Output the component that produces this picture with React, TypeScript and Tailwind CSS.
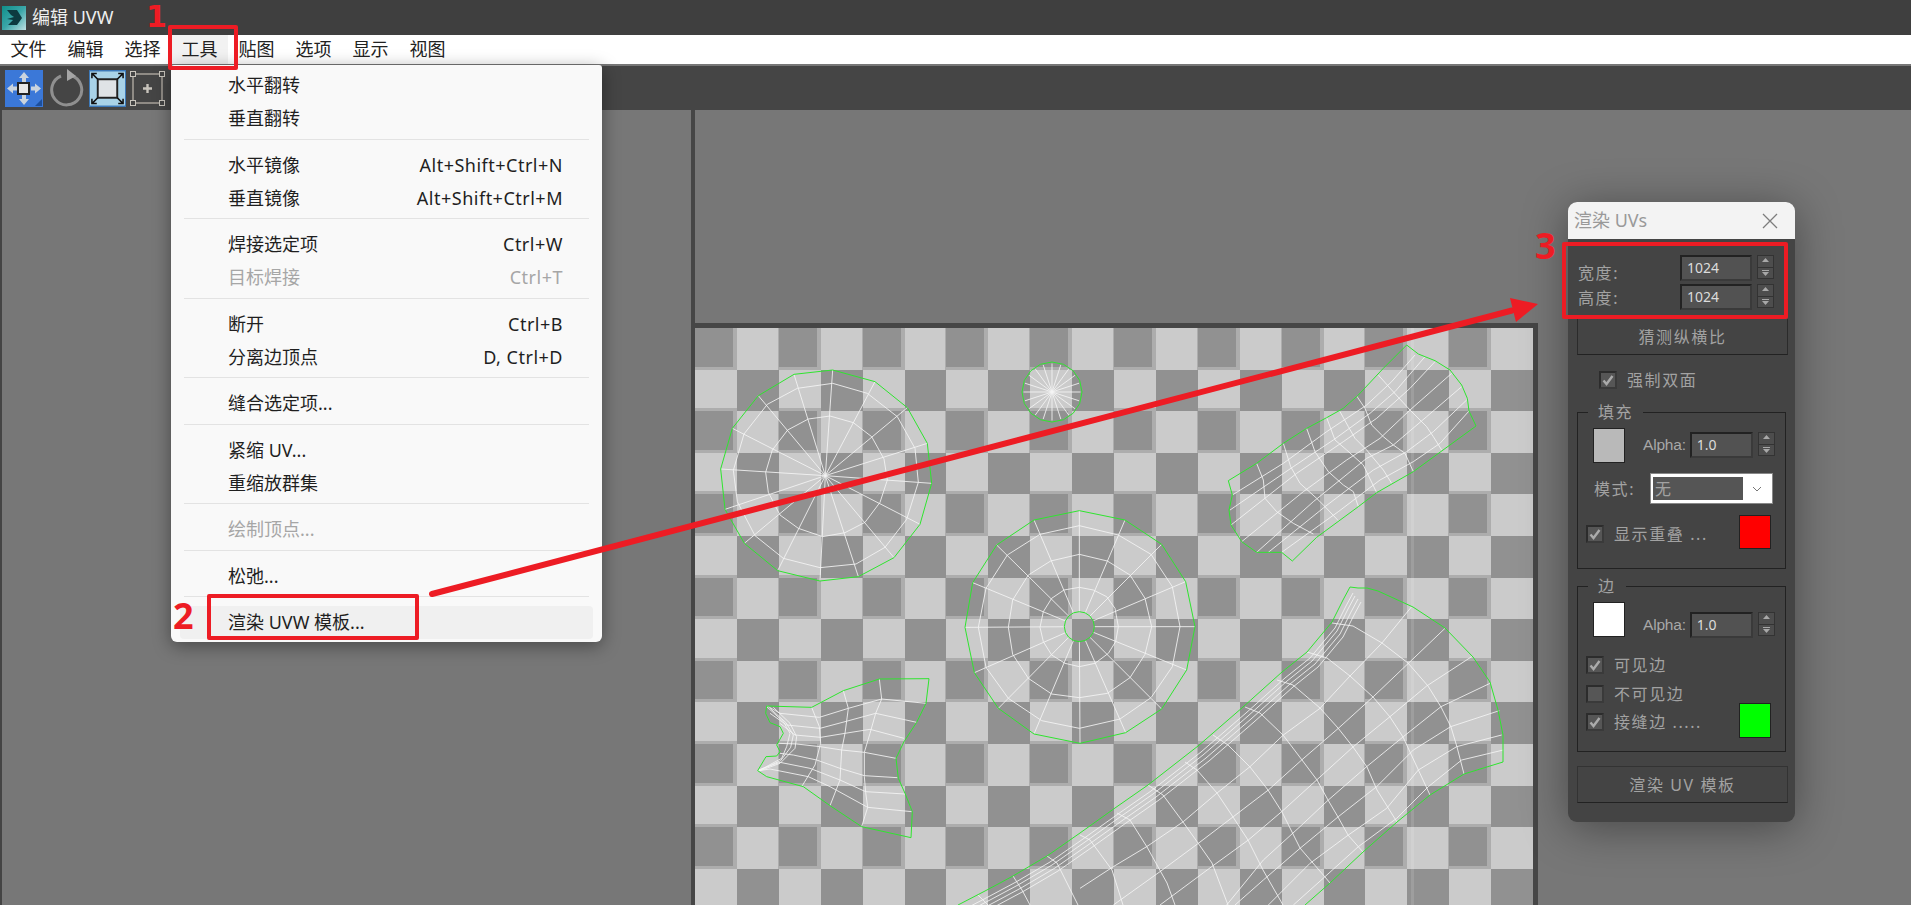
import React from "react";

type P = [number, number];
const pts = (a: P[]) => a.map((p) => p.join(",")).join(" ");
const WHITE = "#f4f4f4";
const GREEN = "#2fe52f";

const Line = ({ p, c = WHITE, o = 0.85, closed = false }: { p: P[]; c?: string; o?: number; closed?: boolean }) =>
  closed ? (
    <polygon points={pts(p)} fill="none" stroke={c} strokeOpacity={o} strokeWidth={1} vectorEffect="non-scaling-stroke" />
  ) : (
    <polyline points={pts(p)} fill="none" stroke={c} strokeOpacity={o} strokeWidth={1} vectorEffect="non-scaling-stroke" />
  );

const Zoomed = ({ x, y, children }: { x: number; y: number; children: React.ReactNode }) => (
  <g transform={`translate(${x} ${y}) scale(${1 / 3})`}>{children}</g>
);

/* first wheel (zoom coords from 680,310) */
const w1Outer: P[] = [[420,813],[535,800],[642,743],[720,643],[755,520],[742,400],[682,293],[585,215],[458,180],[342,193],[235,257],[157,355],[122,477],[135,598],[193,700],[293,782]];
const w1A: P[] = [[428,680],[495,668],[555,637],[600,577],[622,510],[612,447],[575,380],[520,338],[450,318],[385,327],[323,360],[277,420],[257,487],[265,547],[300,615],[355,655]];
const w1B: P[] = [[420,773],[528,762],[615,712],[680,628],[715,517],[705,415],[652,320],[562,250],[458,220],[352,235],[262,283],[192,372],[160,481],[172,575],[225,677],[310,745]];

/* second wheel (zoom coords from 960,505) */
const w2Outer: P[] = [[360,715],[497,683],[605,612],[680,495],[705,365],[677,230],[605,118],[495,45],[358,17],[222,45],[110,120],[38,233],[15,367],[43,503],[115,610],[222,687]];
const w2C: P[] = [[358,670],[480,642],[573,578],[637,485],[660,365],[637,245],[573,148],[475,90],[358,62],[240,88],[142,150],[78,250],[55,367],[78,487],[145,580],[245,647]];
const w2B: P[] = [[358,578],[442,565],[510,518],[555,448],[575,365],[555,280],[510,210],[442,168],[358,148],[272,168],[205,210],[158,285],[145,367],[158,448],[205,520],[275,567]];
const w2A: P[] = [[358,485],[405,475],[445,445],[467,410],[475,365],[465,310],[440,275],[400,255],[358,247],[312,255],[275,280],[250,320],[240,367],[250,410],[275,450],[315,475]];

const circlePts = (cx: number, cy: number, r: number, n: number): P[] =>
  Array.from({ length: n }, (_, i) => [cx + r * Math.cos((i * 2 * Math.PI) / n), cy + r * Math.sin((i * 2 * Math.PI) / n)] as P);

/* fragment at lower left (zoom coords from 680,600) */
const f3Outer: P[] = [[598,237],[747,236],[738,310],[710,367],[672,425],[648,475],[655,535],[675,580],[697,635],[693,713],[545,680],[450,617],[370,560],[260,530],[233,512],[258,470],[290,468],[300,455],[290,435],[310,400],[300,380],[270,368],[257,340],[260,318],[395,322],[490,272]];
const f3Lines: P[][] = [
  [[598,237],[605,297],[587,340],[570,400],[553,457],[553,530],[557,577],[563,622],[545,680]],
  [[490,272],[505,325],[495,400],[485,450],[480,540],[450,617]],
  [[395,322],[418,380],[422,430],[405,495],[365,560]],
  [[738,310],[605,297],[505,325],[418,352],[300,340],[262,318]],
  [[710,367],[587,340],[495,365],[420,385],[320,375],[270,340]],
  [[672,415],[570,388],[495,400],[422,412],[345,405],[300,370]],
  [[648,475],[553,457],[485,450],[420,440],[350,432],[295,430]],
  [[652,533],[553,527],[480,505],[410,480],[340,465],[300,460]],
  [[675,582],[557,575],[480,540],[390,505],[300,487],[235,510]],
  [[695,635],[563,622],[450,560],[385,530],[270,507],[235,512]],
  [[260,320],[310,365],[330,400],[320,440],[305,475],[240,510]],
  [[280,322],[330,370],[350,410],[345,445],[300,490],[240,512]],
  [[270,325],[318,368],[340,405],[332,442],[302,482],[238,511]],
];

/* fragment upper right (zoom coords from 1080,310) */
const f4Outer: P[] = [[980,105],[1015,132],[1065,152],[1110,180],[1145,225],[1162,265],[1167,303],[1188,348],[1000,485],[890,548],[835,590],[710,682],[637,753],[605,727],[530,727],[485,695],[453,645],[447,600],[457,555],[445,512],[530,460],[610,400],[680,355],[740,323],[790,295],[835,255],[910,175]];
const f4Lines: P[][] = [
  [[530,460],[550,510],[555,565],[590,605],[640,640],[700,672]],
  [[610,400],[632,470],[660,520],[710,565],[735,590],[775,632]],
  [[680,355],[705,425],[745,485],[790,525],[820,545],[835,590]],
  [[740,323],[765,390],[800,420],[850,465],[890,548]],
  [[780,305],[805,350],[825,385],[860,420],[910,480],[935,520]],
  [[830,258],[855,295],[875,345],[910,380],[940,405],[975,430],[1000,485]],
  [[895,195],[935,240],[990,300],[1040,350],[1060,380],[1085,420]],
  [[457,555],[610,460],[740,365],[860,285],[935,215],[1005,135]],
  [[450,600],[640,470],[760,390],[870,310],[945,245],[1035,140]],
  [[453,645],[650,490],[790,395],[890,325],[990,235],[1065,155]],
  [[485,695],[670,545],[800,450],[900,385],[990,300],[1115,190]],
  [[530,727],[700,575],[860,445],[940,405],[1040,320],[1145,230]],
  [[565,727],[735,590],[880,480],[980,425],[1060,365],[1160,270]],
  [[605,727],[775,605],[900,510],[1000,455],[1080,400],[1167,303]],
];

/* long fragment (page coords for the outline) */
const edge: P[] = [[958,905],[985,891],[1013,876],[1047,856],[1080,833],[1115,808],[1148,785],[1198,746],[1243,707],[1282,672],[1307,652],[1332,622],[1343,600],[1350,587]];
const f5Outer: P[] = [...edge,[1358,588],[1367,588],[1378,591],[1413,607],[1445,628],[1473,657],[1490,682],[1498,710],[1503,735],[1503,762],[1464,774],[1430,795],[1397,822],[1363,852],[1330,883],[1305,905]];
const f5Cross: P[][] = [
  [[1332,623],[1353,626],[1382,643],[1408,663],[1428,686],[1441,707],[1451,727],[1457,747],[1464,774]],
  [[1307,652],[1327,658],[1350,676],[1373,697],[1390,717],[1403,737],[1417,767],[1430,795]],
  [[1277,680],[1293,685],[1320,708],[1338,728],[1353,747],[1367,767],[1377,790],[1397,822]],
  [[1245,707],[1260,713],[1283,735],[1302,760],[1317,780],[1328,800],[1338,817],[1348,835],[1363,852]],
  [[1213,735],[1228,745],[1250,767],[1268,790],[1282,812],[1300,848],[1325,877],[1330,883]],
  [[1185,762],[1197,770],[1217,793],[1233,817],[1248,840],[1263,870],[1283,905]],
  [[1148,785],[1163,795],[1183,822],[1198,843],[1212,863],[1228,905]],
  [[1117,813],[1130,820],[1147,847],[1167,883],[1175,905]],
  [[1080,835],[1090,840],[1112,870],[1123,905]],
  [[1047,856],[1057,863],[1078,905]],
  [[1013,876],[1022,890],[1030,905]],
  [[978,895],[988,905]],
];
const f5Long: P[][] = ([
  [[1175,170],[1040,258],[930,350],[820,440],[710,540],[605,635],[505,720],[395,800],[240,915]],
  [[1095,85],[985,190],[880,290],[775,385],[665,480],[565,570],[460,650],[355,730],[240,815],[100,915]],
  [[995,20],[905,130],[810,228],[720,325],[610,405],[510,500],[410,580],[310,665],[200,740],[100,800],[0,865]],
  [[1230,250],[1083,320],[970,410],[860,500],[745,600],[660,680],[550,780],[440,915]],
  [[1258,332],[1112,380],[1000,450],[890,560],[775,650],[660,745],[550,840],[465,915]],
  [[1265,405],[1130,440],[1015,510],[920,625],[805,705],[690,790],[600,880],[565,915]],
  [[1270,450],[1145,480],[1045,560],[950,655],[835,740],[735,830],[640,915]],
] as P[][]).map((l) => l.map(([x, y]) => [x / 3 + 1080, y / 3 + 600] as P));
const f5Dense: P[][] = [[3,6],[5,9],[8,12],[11,15]].map(([dx, dy]) =>
  edge.map(([x, y]) => [x + dx, y + dy] as P)
);

const X0 = 695;
const Y0 = 328;
const CW = 41.9;
const CH = 41.6;

function Scene() {
  const cells: React.ReactNode[] = [];
  for (let r = 0; r < 14; r++) {
    for (let c = 0; c < 20; c++) {
      const x = Math.round(X0 + c * CW);
      const y = Math.round(Y0 + r * CH);
      const w = Math.round(X0 + (c + 1) * CW) - x;
      const h = Math.round(Y0 + (r + 1) * CH) - y;
      const dark = (r + c) % 2 === 0;
      const vw = c % 2 === 0 ? 4 : 1;
      cells.push(<rect key={`c${r}-${c}`} x={x} y={y} width={w} height={h} fill={dark ? "#919191" : "#cbcbcb"} />);
      if (c % 2 === 0) cells.push(<rect key={`h${r}-${c}`} x={x} y={y + h - 3} width={w} height={3} fill="#adadad" />);
      if (r % 2 === 0 && c < 19) cells.push(<rect key={`v${r}-${c}`} x={x + w - vw} y={y} width={vw} height={h} fill="#adadad" />);
    }
  }
  const cx1 = 436, cy1 = 497;
  const cx2 = 358, cy2 = 365;
  const small = circlePts(1052, 392, 30, 16);
  const smallS = circlePts(1052, 392, 28.5, 20);
  return (
    <svg className="absolute left-0 top-0" width={1911} height={905}>
      <g shapeRendering="crispEdges">{cells}
        <rect x={1411} y={Y0} width={3} height={577} fill="#ffffff" fillOpacity={0.12} />
      </g>
      {/* first wheel */}
      <Zoomed x={680} y={310}>
        {w1Outer.map((p, i) => <Line key={i} p={[[cx1, cy1], p]} />)}
        <Line p={w1A} closed />
        <Line p={w1B} closed />
        <Line p={w1Outer} c={GREEN} o={1} closed />
      </Zoomed>
      {/* tiny wheel */}
      {smallS.map((p, i) => <Line key={i} p={[[1052, 392], p]} />)}
      <Line p={small} c={GREEN} o={1} closed />
      {/* second wheel */}
      <Zoomed x={960} y={505}>
        {w2Outer.map((p, i) => {
          const d = Math.hypot(p[0] - cx2, p[1] - cy2);
          const s: P = [cx2 + ((p[0] - cx2) / d) * 45, cy2 + ((p[1] - cy2) / d) * 45];
          return <Line key={i} p={[s, p]} />;
        })}
        <Line p={w2A} closed />
        <Line p={w2B} closed />
        <Line p={w2C} closed />
        <Line p={w2Outer} c={GREEN} o={1} closed />
        <Line p={circlePts(cx2, cy2, 45, 16)} c={GREEN} o={1} closed />
      </Zoomed>
      {/* lower left piece */}
      <Zoomed x={680} y={600}>
        {f3Lines.map((l, i) => <Line key={i} p={l} />)}
        <Line p={f3Outer} c={GREEN} o={1} closed />
      </Zoomed>
      {/* upper right piece */}
      <Zoomed x={1080} y={310}>
        {f4Lines.map((l, i) => <Line key={i} p={l} />)}
        <Line p={f4Outer} c={GREEN} o={1} closed />
      </Zoomed>
      {/* long piece */}
      {f5Cross.map((l, i) => <Line key={i} p={l} />)}
      {f5Long.map((l, i) => <Line key={i} p={l} />)}
      {f5Dense.map((l, i) => <Line key={i} p={l} />)}
      <Line p={f5Outer} c={GREEN} o={1} />
    </svg>
  );
}

function MoveIcon() {
  return (
    <svg width={38} height={37} viewBox="0 0 38 37">
      <rect width={38} height={37} fill="#3b78d8" />
      <g fill="#c9d3de">
        <path d="M19 2 l5 6 h-3 v4 h-4 v-4 h-3z" />
        <path d="M19 35 l5 -6 h-3 v-4 h-4 v4 h-3z" />
        <path d="M2 18.5 l6 -5 v3 h4 v4 h-4 v3z" />
        <path d="M36 18.5 l-6 -5 v3 h-4 v4 h4 v3z" />
      </g>
      <rect x={13} y={13} width={11} height={11} fill="#e8e8e8" stroke="#222" strokeWidth={2} />
      <path d="M37 36 h-7 l7 -7z" fill="#1d4f9c" />
    </svg>
  );
}
function RotateIcon() {
  return (
    <svg width={38} height={40} viewBox="0 0 38 40">
      <path d="M14 8 A15 15 0 1 0 24 7.5" fill="none" stroke="#8f8f8f" strokeWidth={3} />
      <path d="M20 1 l9 7 -9 5z" fill="#a5a5a5" />
    </svg>
  );
}
function ScaleIcon() {
  return (
    <svg width={37} height={37} viewBox="0 0 38 37">
      <rect width={38} height={37} fill="#a9d3e8" stroke="#3c78b8" strokeWidth={2} />
      <rect x={9} y={9} width={20} height={19} fill="#dfe3e6" stroke="#222" strokeWidth={2} />
      <g stroke="#111" strokeWidth={1.6} fill="none">
        <path d="M9 9 L3 3 M3 8 V3 H8" />
        <path d="M29 9 L35 3 M30 3 H35 V8" />
        <path d="M9 28 L3 34 M3 29 V34 H8" />
        <path d="M29 28 L35 34 M30 34 H35 V29" />
      </g>
    </svg>
  );
}
function PointIcon() {
  return (
    <svg width={35} height={35} viewBox="0 0 35 35">
      <rect x={3} y={3} width={29} height={29} fill="none" stroke="#a8a29a" strokeWidth={1.5} />
      {[[3, 3], [32, 3], [3, 32], [32, 32]].map(([x, y], i) => (
        <rect key={i} x={x - 2.5} y={y - 2.5} width={5} height={5} fill="#444" stroke="#c8c4bc" strokeWidth={1} />
      ))}
      <path d="M17.5 13 v9 M13 17.5 h9" stroke="#c8c4bc" strokeWidth={2.4} />
    </svg>
  );
}
function AppLogo() {
  return (
    <svg width={24} height={24} viewBox="0 0 24 24">
      <defs>
        <linearGradient id="lg" x1="0" y1="0" x2="1" y2="1">
          <stop offset="0" stopColor="#0f8f8a" />
          <stop offset="0.5" stopColor="#3aa6a8" />
          <stop offset="1" stopColor="#bfdfe2" />
        </linearGradient>
      </defs>
      <rect width={24} height={24} fill="url(#lg)" />
      <path d="M5 4 h10 l5 8 -5 7 H6 l5 -5 -6 -1 7 -2 -3 -2z" fill="#0d3a40" />
    </svg>
  );
}

const menuLabels = ["文件", "编辑", "选择", "工具", "贴图", "选项", "显示", "视图"];

type MI = { t: string; s?: string; off?: boolean; hot?: boolean };
const menuGroups: MI[][] = [
  [{ t: "水平翻转" }, { t: "垂直翻转" }],
  [{ t: "水平镜像", s: "Alt+Shift+Ctrl+N" }, { t: "垂直镜像", s: "Alt+Shift+Ctrl+M" }],
  [{ t: "焊接选定项", s: "Ctrl+W" }, { t: "目标焊接", s: "Ctrl+T", off: true }],
  [{ t: "断开", s: "Ctrl+B" }, { t: "分离边顶点", s: "D, Ctrl+D" }],
  [{ t: "缝合选定项..." }],
  [{ t: "紧缩 UV..." }, { t: "重缩放群集" }],
  [{ t: "绘制顶点...", off: true }],
  [{ t: "松弛..." }],
  [{ t: "渲染 UVW 模板...", hot: true }],
];

function Menu() {
  return (
    <div className="absolute left-[171px] top-[65px] w-[431px] h-[577px] rounded-b-[6px] rounded-t-[3px] bg-[#f9f9f9] pt-[3.5px] shadow-[0_4px_18px_rgba(0,0,0,0.4)]">
      {menuGroups.map((g, i) => (
        <div key={i}>
          {i > 0 && <div className="mx-[13px] mt-[4px] mb-[8.5px] h-[1px] bg-[#e3e3e3]" />}
          {g.map((it) => (
            <div
              key={it.t}
              className={`mx-[9px] flex h-[33px] items-center justify-between rounded-[4px] pl-[48px] pr-[30px] text-[18px] leading-none ${it.off ? "text-[#a6a6a6]" : "text-[#1f1f1f]"} ${it.hot ? "bg-[#f0f0f0]" : ""}`}
            >
              <span>{it.t}</span>
              {it.s && <span className="tracking-[0.5px]">{it.s}</span>}
            </div>
          ))}
        </div>
      ))}
    </div>
  );
}

function Spin() {
  return (
    <div className="ml-[5px] flex h-[24px] w-[17px] shrink-0 flex-col border border-[#333] bg-[#4d4d4d]">
      <div className="flex flex-1 items-center justify-center border-b border-[#333]">
        <svg width={9} height={6} viewBox="0 0 9 6"><path d="M4.5 0 L8 4 H1z" fill="#a8a8a8" /></svg>
      </div>
      <div className="flex flex-1 items-center justify-center">
        <svg width={9} height={6} viewBox="0 0 9 6"><path d="M4.5 6 L8 2 H1z" fill="#a8a8a8" /><path d="M1 0.5h7" stroke="#a8a8a8" /></svg>
      </div>
    </div>
  );
}

function NumberInput({ v, w }: { v: string; w: string }) {
  return (
    <div className={`flex h-[26px] items-center border-[2px] border-t-[#222] border-l-[#222] border-r-[#3a3a3a] border-b-[#3a3a3a] bg-[#525252] pl-[5px] text-[14px] leading-none text-[#dcdcdc] ${w}`}>
      {v}
    </div>
  );
}

function Check({ on = true }: { on?: boolean }) {
  return (
    <div className="flex h-[18px] w-[18px] shrink-0 items-center justify-center border-[2px] border-t-[#2c2c2c] border-l-[#2c2c2c] border-r-[#3a3a3a] border-b-[#3a3a3a] bg-[#565656]">
      {on && (
        <svg width={12} height={12} viewBox="0 0 12 12">
          <path d="M1.5 6.5 L4.5 10 L10.5 2" fill="none" stroke="#ababab" strokeWidth={2.4} />
        </svg>
      )}
    </div>
  );
}

function AlphaRow({ swatch, top }: { swatch: string; top: string }) {
  return (
    <div className="ml-[15px] flex h-[35px]">
      <div className={`h-[35px] w-[32px] shrink-0 border border-[#222] ${swatch}`} />
      <div className={`ml-[18px] flex h-[26px] items-center text-[15.5px] tracking-[-0.2px] text-[#a8a8a8] [font-family:'Liberation_Sans',sans-serif] ${top}`}>Alpha:</div>
      <div className={`ml-[4px] flex items-start ${top}`}>
        <NumberInput v="1.0" w="w-[63px]" />
        <Spin />
      </div>
    </div>
  );
}

function Dialog() {
  const text = "text-[16px] leading-none text-[#a2a2a2] tracking-[1.6px]";
  return (
    <div className="absolute left-[1568px] top-[202px] w-[227px] overflow-hidden rounded-[9px] bg-[#444444] shadow-[0_6px_45px_rgba(0,0,0,0.4)]">
      <div className="flex h-[37px] items-center justify-between bg-[#f3f3f3] pl-[6px] pr-[17px] text-[18px] text-[#999999]">
        <span>渲染 UVs</span>
        <svg width={16} height={16} viewBox="0 0 16 16"><path d="M1 1 L15 15 M15 1 L1 15" stroke="#7d7d7d" strokeWidth={1.3} /></svg>
      </div>
      <div className="pl-[9px] pr-[7px] pb-[19px] pt-[16px]">
        <div className="flex h-[26px] items-start">
          <div className={`${text} w-[103px] pt-[10px] pl-[1px]`}>宽度:</div>
          <NumberInput v="1024" w="w-[72px]" />
          <Spin />
        </div>
        <div className="mt-[3px] flex h-[26px] items-start">
          <div className={`${text} w-[103px] pt-[6px] pl-[1px]`}>高度:</div>
          <NumberInput v="1024" w="w-[72px]" />
          <Spin />
        </div>
        <div className={`mt-[9px] flex h-[36px] items-center justify-center border border-t-0 border-[#2b2b2b] border-b-[#222] ${text}`}>猜测纵横比</div>
        <div className="mt-[16px] ml-[22px] flex items-center gap-[10px]">
          <Check />
          <span className={text}>强制双面</span>
        </div>

        <fieldset className="mr-[2px] mt-[13px] border border-[#222] pb-[19px] min-w-0">
          <legend className={`ml-[10px] h-[20px] px-[10px] pt-[2px] ${text}`}>填充</legend>
          <div className="mt-[6px]"><AlphaRow swatch="bg-[#b9b9b9]" top="mt-[4px]" /></div>
          <div className="mt-[10px] flex h-[31px] items-center">
            <span className={`${text} ml-[16px] w-[56px]`}>模式:</span>
            <div className="flex h-[31px] w-[123px] items-center border border-[#888] bg-white pl-[2px] pr-[10px]">
              <div className={`flex h-[23px] w-[90px] items-center bg-[#555555] pl-[2px] ${text}`}>无</div>
              <svg className="ml-auto" width={10} height={6} viewBox="0 0 10 6"><path d="M1 1 L5 5 L9 1" fill="none" stroke="#777" strokeWidth={1} /></svg>
            </div>
          </div>
          <div className="mt-[11px] flex h-[34px] items-start justify-between pr-[14px]">
            <div className="ml-[8px] mt-[10px] flex items-center gap-[10px]">
              <Check />
              <span className={text}>显示重叠 ...</span>
            </div>
            <div className="h-[34px] w-[32px] border border-[#222] bg-[#ff0000]" />
          </div>
        </fieldset>

        <fieldset className="mr-[2px] mt-[7px] border border-[#222] pb-[13px] min-w-0">
          <legend className={`ml-[10px] h-[20px] px-[10px] pt-[2px] ${text}`}>边</legend>
          <div className="mt-[6px]"><AlphaRow swatch="bg-white" top="mt-[10px]" /></div>
          <div className="ml-[8px] mt-[19px] flex items-center gap-[10px]">
            <Check />
            <span className={text}>可见边</span>
          </div>
          <div className="mt-[11px] flex items-start justify-between pr-[14px]">
            <div className="ml-[8px] flex flex-col gap-[10px]">
              <div className="flex items-center gap-[10px]">
                <Check on={false} />
                <span className={text}>不可见边</span>
              </div>
              <div className="flex items-center gap-[10px]">
                <Check />
                <span className={text}>接缝边 .....</span>
              </div>
            </div>
            <div className="mt-[18px] h-[35px] w-[32px] border border-[#222] bg-[#00ff00]" />
          </div>
        </fieldset>

        <div className={`mt-[14px] flex h-[37px] items-center justify-center border border-[#333] border-b-[#222] ${text}`}>渲染 UV 模板</div>
      </div>
    </div>
  );
}

function Annotations() {
  const num = "absolute leading-none font-bold text-[#ed1c24]";
  return (
    <>
      <span className={`${num} left-[146px] top-[2px] [font-family:'DejaVu_Sans',sans-serif] text-[30px]`}>1</span>
      <span className={`${num} left-[173px] top-[598px] [font-family:'Noto_Sans',sans-serif] text-[36px]`}>2</span>
      <span className={`${num} left-[1535px] top-[228px] [font-family:'Noto_Sans',sans-serif] text-[36px]`}>3</span>
      <div className="absolute left-[168px] top-[25px] h-[45px] w-[70px] rounded-[2px] border-[4px] border-[#ed1c24]" />
      <div className="absolute left-[207px] top-[594px] h-[46px] w-[212px] rounded-[2px] border-[4px] border-[#ed1c24]" />
      <div className="absolute left-[1562px] top-[242px] h-[77px] w-[226px] rounded-[2px] border-[4px] border-[#ed1c24]" />
      <svg className="absolute left-0 top-0" width={1911} height={905}>
        <line x1={432} y1={594} x2={1512} y2={310.5} stroke="#ed1c24" strokeWidth={6} strokeLinecap="round" />
        <polygon points="1538,304 1510,298 1516,322" fill="#ed1c24" />
      </svg>
    </>
  );
}

export default function App() {
  return (
    <div className="relative flex h-[905px] w-[1911px] flex-col overflow-hidden bg-[#777777] [font-family:'Noto_Sans','Noto_Sans_CJK_SC',sans-serif]">
      <div className="flex h-[35px] shrink-0 items-center bg-[#3f3f3f] pl-[2px] text-[18px] text-[#eeeeee]">
        <AppLogo />
        <span className="ml-[6px]">编辑 UVW</span>
      </div>
      <div className="flex h-[29px] shrink-0 items-center bg-white text-[18px] text-[#222222]">
        {menuLabels.map((m) => (
          <div key={m} className={`flex h-[29px] w-[57px] items-center justify-center ${m === "工具" ? "bg-[#f2f2f2]" : ""}`}>{m}</div>
        ))}
      </div>
      <div className="flex h-[46px] shrink-0 items-center gap-[4px] border-t-[2px] border-[#777] bg-[#454545] pl-[5px]">
        <MoveIcon />
        <RotateIcon />
        <ScaleIcon />
        <PointIcon />
      </div>
      <div className="relative flex-1 border-l-[2px] border-[#444]" />
      <Scene />
      <div className="absolute left-[691px] top-[110px] h-[795px] w-[4px] bg-[#464646]" />
      <div className="absolute left-[691px] top-[323px] h-[582px] w-[847px] border-[5px] border-b-0 border-l-[4px] border-[#464646]" />
      <Menu />
      <Dialog />
      <Annotations />
    </div>
  );
}
